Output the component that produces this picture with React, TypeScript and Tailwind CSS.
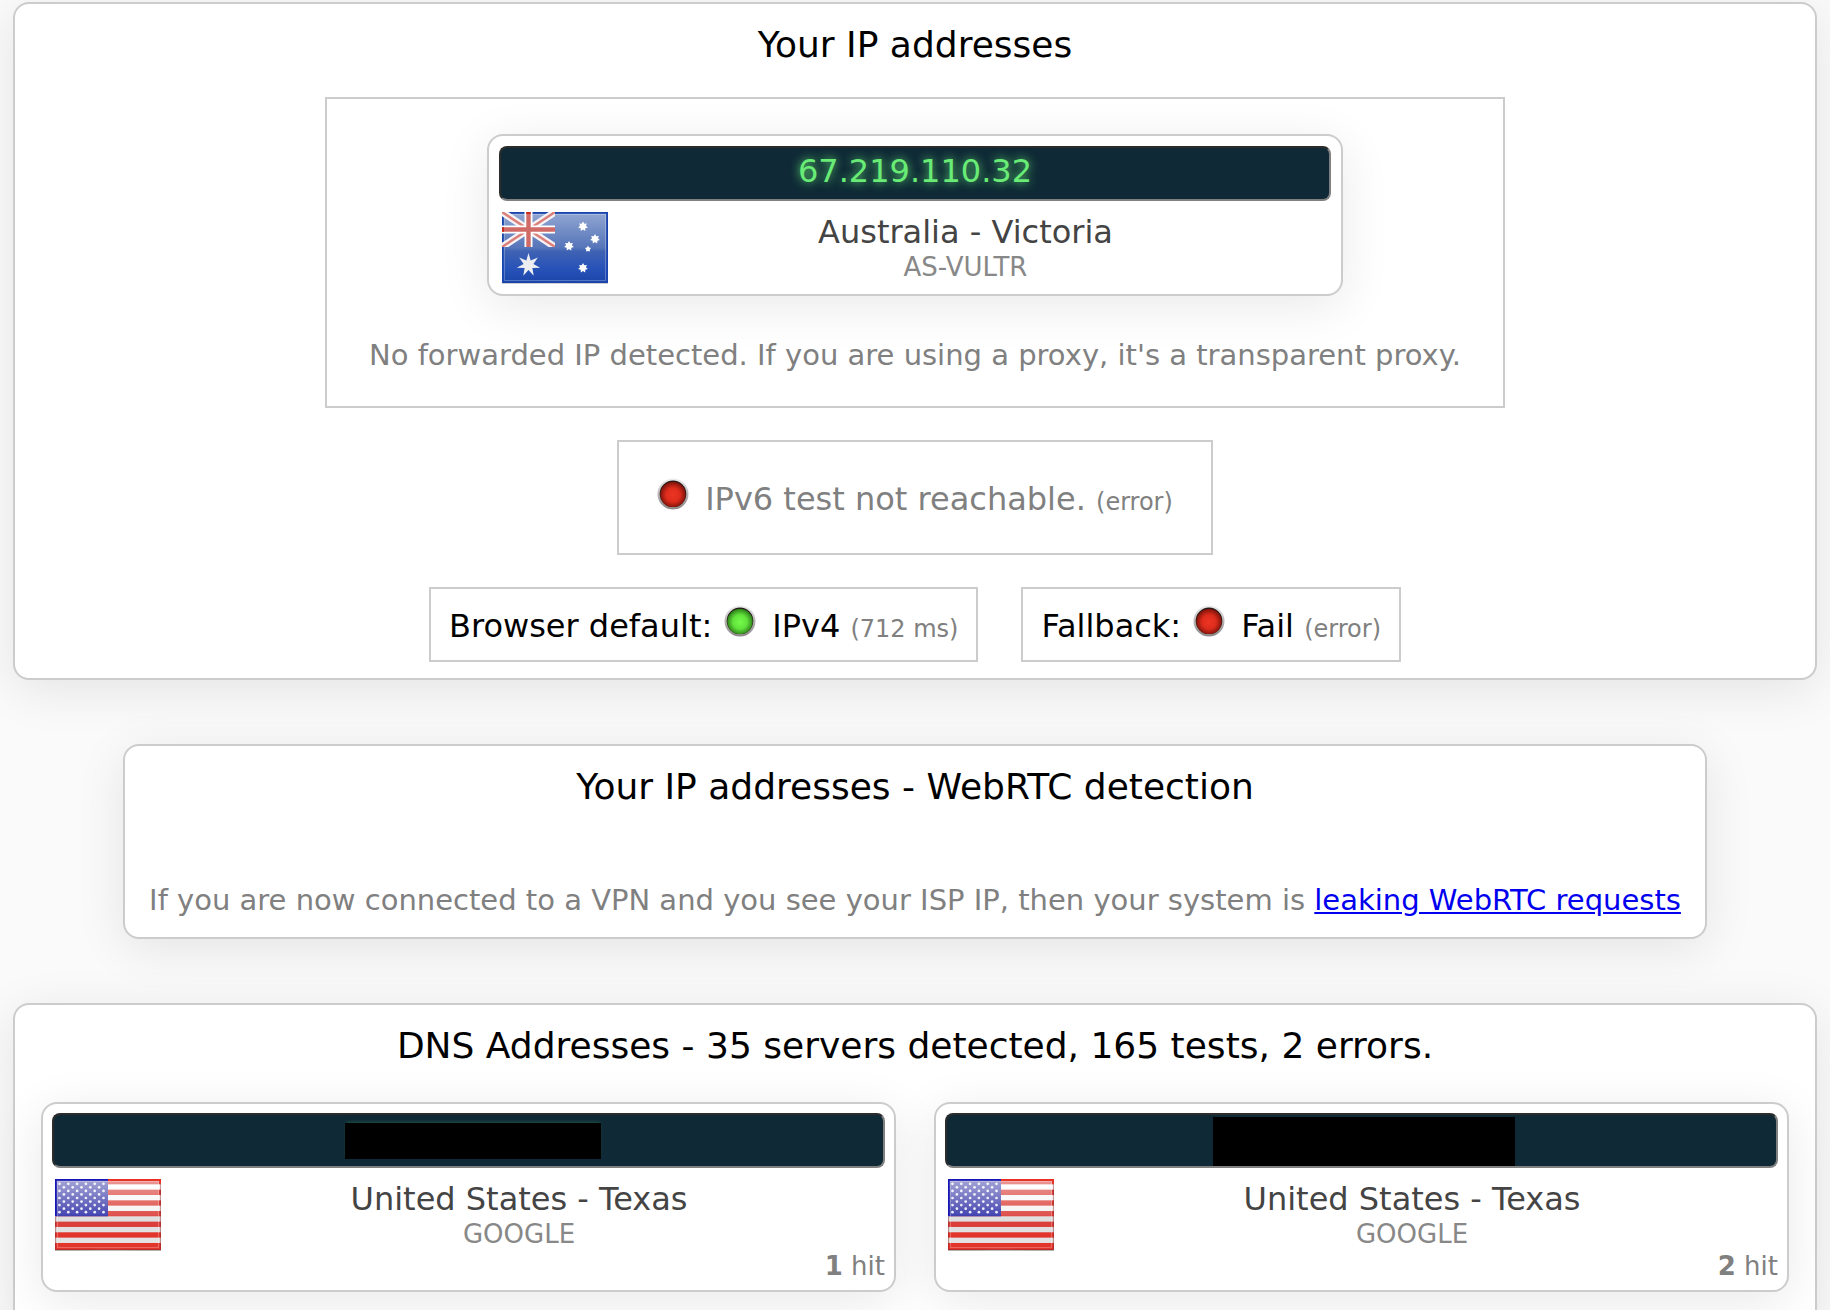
import React from "react";
import clsx from "clsx";

type LedColor = "red" | "green";

const ledStops = {
  red: { center: "#ee3524", middle: "#dd2c1c", edge: "#6e0f08" },
  green: { center: "#74fb4a", middle: "#62e33c", edge: "#256f13" },
};

const Led = ({ color }: { color: LedColor }) => {
  const stops = ledStops[color];

  return (
    <svg className="h-8 w-8 shrink-0" viewBox="0 0 32 32" aria-hidden="true">
      <defs>
        <linearGradient id={`ring-${color}`} x1="0" y1="0" x2="0" y2="1">
          <stop offset="0" stopColor="#efefef" />
          <stop offset="0.5" stopColor="#b9b5b5" />
          <stop offset="1" stopColor="#8b8686" />
        </linearGradient>
        <radialGradient id={`bulb-${color}`} cx="0.5" cy="0.52" r="0.55">
          <stop offset="0" stopColor={stops.center} />
          <stop offset="0.5" stopColor={stops.middle} />
          <stop offset="1" stopColor={stops.edge} />
        </radialGradient>
      </defs>
      <circle cx="16" cy="16" r="15.5" fill={`url(#ring-${color})`} />
      <circle cx="16" cy="15.8" r="13.3" fill="#241a18" />
      <circle cx="16" cy="16.4" r="12.7" fill={`url(#bulb-${color})`} />
    </svg>
  );
};

const star = (cx: number, cy: number, outer: number, inner: number, n: number) =>
  Array.from({ length: n * 2 }, (_, i) => {
    const r = i % 2 ? inner : outer;
    const a = (Math.PI * i) / n - Math.PI / 2;
    return `${(cx + r * Math.cos(a)).toFixed(2)},${(cy + r * Math.sin(a)).toFixed(2)}`;
  }).join(" ");

// Glossy highlight drawn over both flags
const Gloss = ({ id, strength }: { id: string; strength: number }) => (
  <>
    <defs>
      <linearGradient id={id} x1="0" y1="0" x2="0" y2="1">
        <stop offset="0" stopColor="#fff" stopOpacity={strength} />
        <stop offset="0.5" stopColor="#fff" stopOpacity={strength / 4} />
        <stop offset="0.56" stopColor="#fff" stopOpacity="0" />
      </linearGradient>
      <radialGradient id={`${id}-glow`} cx="0.5" cy="1" r="0.5">
        <stop offset="0" stopColor="#fff" stopOpacity="0.35" />
        <stop offset="1" stopColor="#fff" stopOpacity="0" />
      </radialGradient>
    </defs>
    <rect x="2" y="2" width="102" height="67" fill={`url(#${id})`} />
    <ellipse cx="53" cy="69" rx="38" ry="6" fill={`url(#${id}-glow)`} />
    <rect x="2.5" y="2.5" width="101" height="66" fill="none" stroke="#fff" strokeOpacity="0.25" />
  </>
);

const AustraliaFlag = () => (
  <svg className="h-18 w-[106px] shrink-0" viewBox="0 0 106 72" role="img" aria-label="Australia">
    <defs>
      <linearGradient id="au-blue" x1="0" y1="0" x2="0" y2="1">
        <stop offset="0" stopColor="#4468b2" />
        <stop offset="0.5" stopColor="#4466b2" />
        <stop offset="0.8" stopColor="#2752b8" />
        <stop offset="1" stopColor="#1c45a8" />
      </linearGradient>
      <clipPath id="au-canton">
        <rect width="53" height="35" />
      </clipPath>
    </defs>
    <rect y="1" width="106" height="71" fill="#000" opacity="0.2" />
    <rect width="106" height="71" fill="url(#au-blue)" />
    <Gloss id="au-gloss" strength={0.4} />
    <rect x="0.75" y="0.75" width="104.5" height="69.5" fill="none" stroke="#1a44b0" strokeWidth="1.5" />
    <g clipPath="url(#au-canton)">
      <path d="M0 0L53 35M53 0L0 35" stroke="#f6f3f4" strokeWidth="7" />
      <path d="M0 0L53 35M53 0L0 35" stroke="#dc7f7b" strokeWidth="2.4" />
      <path d="M26.5 0V35M0 17.5H53" stroke="#fff" strokeWidth="8" />
      <path d="M26.5 0V35M0 17.5H53" stroke="#cf6a66" strokeWidth="4.4" />
      <path d="M26.5 0V2M0 17.5H2" stroke="#c62a1c" strokeWidth="4.4" />
    </g>
    <polygon points={star(26.5, 53, 12, 5, 7)} fill="#eceef2" />
    <polygon points={star(81, 14.5, 5, 3, 7)} fill="#fff" />
    <polygon points={star(93, 27, 5, 3, 7)} fill="#fff" />
    <polygon points={star(67, 34, 5, 3, 7)} fill="#fff" />
    <polygon points={star(86, 37, 3.2, 1.9, 5)} fill="#fff" />
    <polygon points={star(81, 56, 5, 3, 7)} fill="#fff" />
  </svg>
);

const UnitedStatesFlag = ({ id }: { id: string }) => (
  <svg className="h-18 w-[106px] shrink-0" viewBox="0 0 106 72" role="img" aria-label="United States">
    <defs>
      <linearGradient id={`${id}-white`} x1="0" y1="0" x2="0" y2="1">
        <stop offset="0" stopColor="#fff" />
        <stop offset="0.5" stopColor="#f2f2f2" />
        <stop offset="0.54" stopColor="#dedede" />
        <stop offset="1" stopColor="#e6e6e6" />
      </linearGradient>
      <linearGradient id={`${id}-blue`} x1="0" y1="0" x2="0" y2="1">
        <stop offset="0" stopColor="#5656b4" />
        <stop offset="1" stopColor="#2f2fa8" />
      </linearGradient>
    </defs>
    <rect y="1" width="106" height="71" fill="#000" opacity="0.3" />
    <rect width="106" height="71" fill={`url(#${id}-white)`} />
    {[0, 2, 4, 6, 8, 10, 12].map((n) => (
      <rect
        key={n}
        y={n * 5.33}
        width="106"
        height={n === 12 ? 7 : 5.33}
        fill={n > 9 ? "#e2352c" : "#db3f3a"}
      />
    ))}
    <rect width="53" height="37.3" fill={`url(#${id}-blue)`} />
    <Gloss id={`${id}-gloss`} strength={0.45} />
    {Array.from({ length: 9 }, (_, row) =>
      Array.from({ length: row % 2 ? 5 : 6 }, (_, col) => (
        <circle
          key={`${row}-${col}`}
          cx={4.5 + col * 8.8 + (row % 2 ? 4.4 : 0)}
          cy={4.8 + row * 3.55}
          r="1.35"
          fill="#fff"
          fillOpacity="0.9"
        />
      ))
    )}
    <path d="M53 0.7H105.3V4" fill="none" stroke="#ee2f20" strokeWidth="1.4" />
    <path d="M53 0.7H0.7V37" fill="none" stroke="#1717b8" strokeWidth="1.4" />
    <path d="M0.6 38V70.5M105.4 5V70.5M0 70.5H106" fill="none" stroke="#8c2222" strokeOpacity="0.5" />
  </svg>
);

const Panel = ({ title, className, children }: {
  title: string;
  className?: string;
  children: React.ReactNode;
}) => (
  <section
    className={clsx(
      "flex w-full flex-col items-center rounded-2xl border-2 border-[#ccc] bg-white pt-[19px] shadow-[0_10px_50px_rgba(0,0,0,0.09)]",
      className
    )}
  >
    <h2 className="text-center text-[36px] leading-[44px]">{title}</h2>
    {children}
  </section>
);

const ServerCard = ({ address, flag, place, network, hits, className }: {
  address: React.ReactNode;
  flag: React.ReactNode;
  place: string;
  network: string;
  hits?: number;
  className?: string;
}) => (
  <article
    className={clsx(
      "w-full rounded-2xl border-2 border-[#ccc] bg-white shadow-[0_10px_50px_rgba(0,0,0,0.09)]",
      className
    )}
  >
    <div className="flex h-[55px] justify-center rounded-lg border-2 border-t-[#2c2c2c] border-r-[#808080] border-b-[#808080] border-l-[#2c2c2c] bg-[#0f2a36]">
      {address}
    </div>
    <div className="mt-[11px] flex pr-2 pl-[3px]">
      {flag}
      <div className="flex-1 text-center">
        <p className="text-[32px] leading-10 text-[#444]">{place}</p>
        <p className="text-[26px] leading-[30px] text-[#888]">{network}</p>
      </div>
    </div>
    {hits !== undefined && (
      <p className="text-right text-[26px] leading-[30px] text-[#808080]">
        <b>{hits}</b> hit
      </p>
    )}
  </article>
);

const Note = ({ children }: { children: React.ReactNode }) => (
  <small className="text-[24px] text-[#808080]">{children}</small>
);

const Check = ({ label, color, result, note }: {
  label: string;
  color: LedColor;
  result: string;
  note: string;
}) => (
  <div className="flex h-[75px] items-start border-2 border-[#ccc] px-[18px] pt-4 text-[32px] leading-[42px]">
    <span>{label}</span>
    <span className="mr-4 ml-3">
      <Led color={color} />
    </span>
    <span>
      {result} <Note>{note}</Note>
    </span>
  </div>
);

const App = () => {
  return (
    <main className="h-screen overflow-hidden bg-[#fafafa] px-[13px] pt-0.5 font-['DejaVu_Sans',Verdana,sans-serif] text-black">
      <div className="flex flex-col items-center gap-16">
        <Panel title="Your IP addresses" className="pb-4">
          <div className="mt-[30px] flex w-full max-w-[1180px] flex-col items-center border-2 border-[#ccc] pt-[35px] pb-8">
            <div className="w-full max-w-[856px]">
              <ServerCard
                className="p-[10px]"
                address={
                  <span className="text-[32px] leading-[46px] text-[#69ec76] [text-shadow:0_0_10px_#69ec76]">
                    67.219.110.32
                  </span>
                }
                flag={<AustraliaFlag />}
                place="Australia - Victoria"
                network="AS-VULTR"
              />
            </div>
            <p className="mt-10 text-center text-[29px] leading-[38px] text-[#808080]">
              No forwarded IP detected. If you are using a proxy, it's a transparent proxy.
            </p>
          </div>

          <div className="mt-8 flex h-[115px] items-start border-2 border-[#ccc] px-[38px] pt-9">
            <Led color="red" />
            <p className="ml-4 text-[32px] leading-[42px] text-[#808080]">
              IPv6 test not reachable. <Note>(error)</Note>
            </p>
          </div>

          <div className="mt-8 flex flex-wrap justify-center gap-[43px]">
            <Check label="Browser default:" color="green" result="IPv4" note="(712 ms)" />
            <Check label="Fallback:" color="red" result="Fail" note="(error)" />
          </div>
        </Panel>

        <Panel
          title="Your IP addresses - WebRTC detection"
          className="max-w-[1584px] pb-[18px]"
        >
          <p className="mt-[72px] text-center text-[29px] leading-[38px] text-[#808080]">
            If you are now connected to a VPN and you see your ISP IP, then your system is{" "}
            <a href="#webrtc" className="text-[#0000ee] underline">
              leaking WebRTC requests
            </a>
          </p>
        </Panel>

        <Panel
          title="DNS Addresses - 35 servers detected, 165 tests, 2 errors."
          className="pb-24"
        >
          <div className="mt-[34px] grid w-full grid-cols-2 gap-[38px] px-[26px]">
            <ServerCard
              className="p-[9px]"
              address={
                <span className="mt-2 ml-2 h-9 w-64 bg-black shadow-[0_-2px_3px_-1px_rgba(105,236,118,0.2)]" />
              }
              flag={<UnitedStatesFlag id="us-1" />}
              place="United States - Texas"
              network="GOOGLE"
              hits={1}
            />
            <ServerCard
              className="p-[9px]"
              address={<span className="mt-0.5 ml-1 w-[302px] bg-black" />}
              flag={<UnitedStatesFlag id="us-2" />}
              place="United States - Texas"
              network="GOOGLE"
              hits={2}
            />
          </div>
        </Panel>
      </div>
    </main>
  );
};

export default App;
